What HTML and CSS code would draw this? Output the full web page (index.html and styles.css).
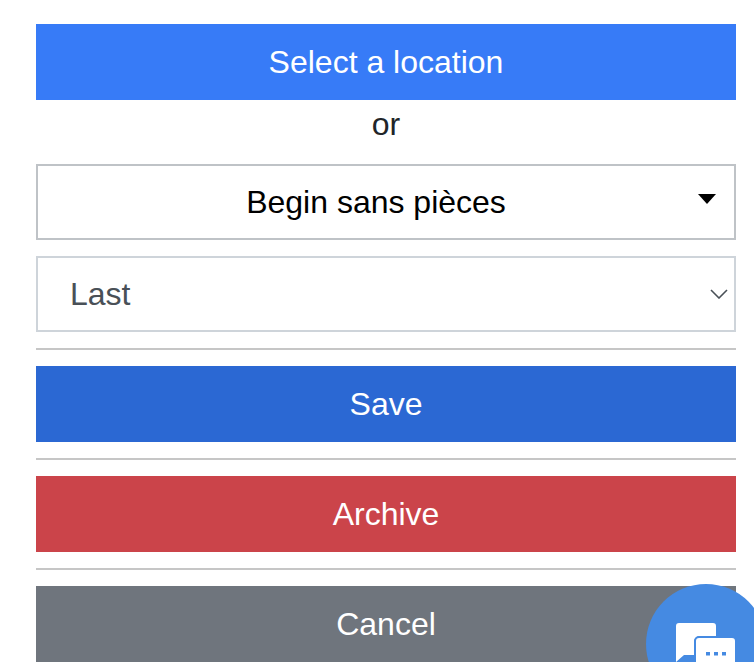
FILE: index.html
```html
<!DOCTYPE html>
<html lang="en">
<head>
<meta charset="utf-8">
<title>Location</title>
<link rel="stylesheet" href="styles.css">
</head>
<body>
<main class="form">
  <button class="btn btn-location" type="button">Select a location</button>
  <div class="or">or</div>
  <button class="dropdown" type="button">
    <span class="dropdown-label">Begin sans pièces</span>
    <svg class="caret" width="18" height="10" viewBox="0 0 18 10"><path d="M0 0H18L9 10Z"/></svg>
  </button>
  <div class="select">
    <span>Last</span>
    <svg class="chevron" width="18" height="10" viewBox="0 0 18 10"><path d="M1 1L9 9L17 1"/></svg>
  </div>
  <hr class="rule">
  <button class="btn btn-save" type="button">Save</button>
  <hr class="rule">
  <button class="btn btn-archive" type="button">Archive</button>
  <hr class="rule">
  <button class="btn btn-cancel" type="button">Cancel</button>
</main>
<div class="fab">
  <svg class="fab-icon" width="62" height="46" viewBox="0 0 62 46">
    <path class="back" d="M3 0H37A3 3 0 0 1 40 3V13H24A6 6 0 0 0 18 19V32H8L0 39V3A3 3 0 0 1 3 0Z"/>
    <rect class="front" x="19" y="14" width="41" height="36" rx="4"/>
    <rect class="dot" x="30" y="29" width="4" height="3.5"/>
    <rect class="dot" x="38" y="29" width="4" height="3.5"/>
    <rect class="dot" x="46" y="29" width="4" height="3.5"/>
  </svg>
</div>
</body>
</html>
```
FILE: styles.css
```css
* { box-sizing: border-box; }
html, body { margin: 0; padding: 0; height: 662px; overflow: hidden; background: #fff; }
body { font-family: "Liberation Sans", Arial, sans-serif; font-size: 32px; color: #212529; }
.form { display: flex; flex-direction: column; padding: 24px 18px 0 36px; }
.btn { height: 76px; flex: none; border: 0; color: #fff; font: inherit; text-align: center; padding: 0; }
.btn-location { background: #377bf7; }
.btn-save { background: #2b68d3; }
.btn-archive { background: #cb444a; }
.btn-cancel { background: #6f757d; }
.or { height: 48px; line-height: 48px; text-align: center; margin-bottom: 16px; }
.dropdown { position: relative; height: 76px; flex: none; display: flex; align-items: center; justify-content: center; background: #fff; border: 2px solid #bfc3c7; color: #000; font: inherit; padding: 0 20px 0 0; }
.caret { position: absolute; right: 18px; top: 28px; fill: #000; }
.select { height: 76px; flex: none; margin-top: 16px; display: flex; align-items: center; justify-content: space-between; border: 2px solid #ced4da; color: #495057; padding: 0 6px 0 32px; }
.chevron { fill: none; stroke: #495057; stroke-width: 1.6; }
.rule { width: 100%; height: 2px; flex: none; margin: 16px 0; border: 0; background: #c6c6c6; }
.fab { position: fixed; left: 646px; top: 584px; width: 120px; height: 120px; border-radius: 50%; background: #458ae2; }
.fab-icon { position: absolute; left: 30px; top: 39px; }
.back { fill: #fff; }
.front { fill: #fff; stroke: #458ae2; stroke-width: 2; }
.dot { fill: #458ae2; }
```
